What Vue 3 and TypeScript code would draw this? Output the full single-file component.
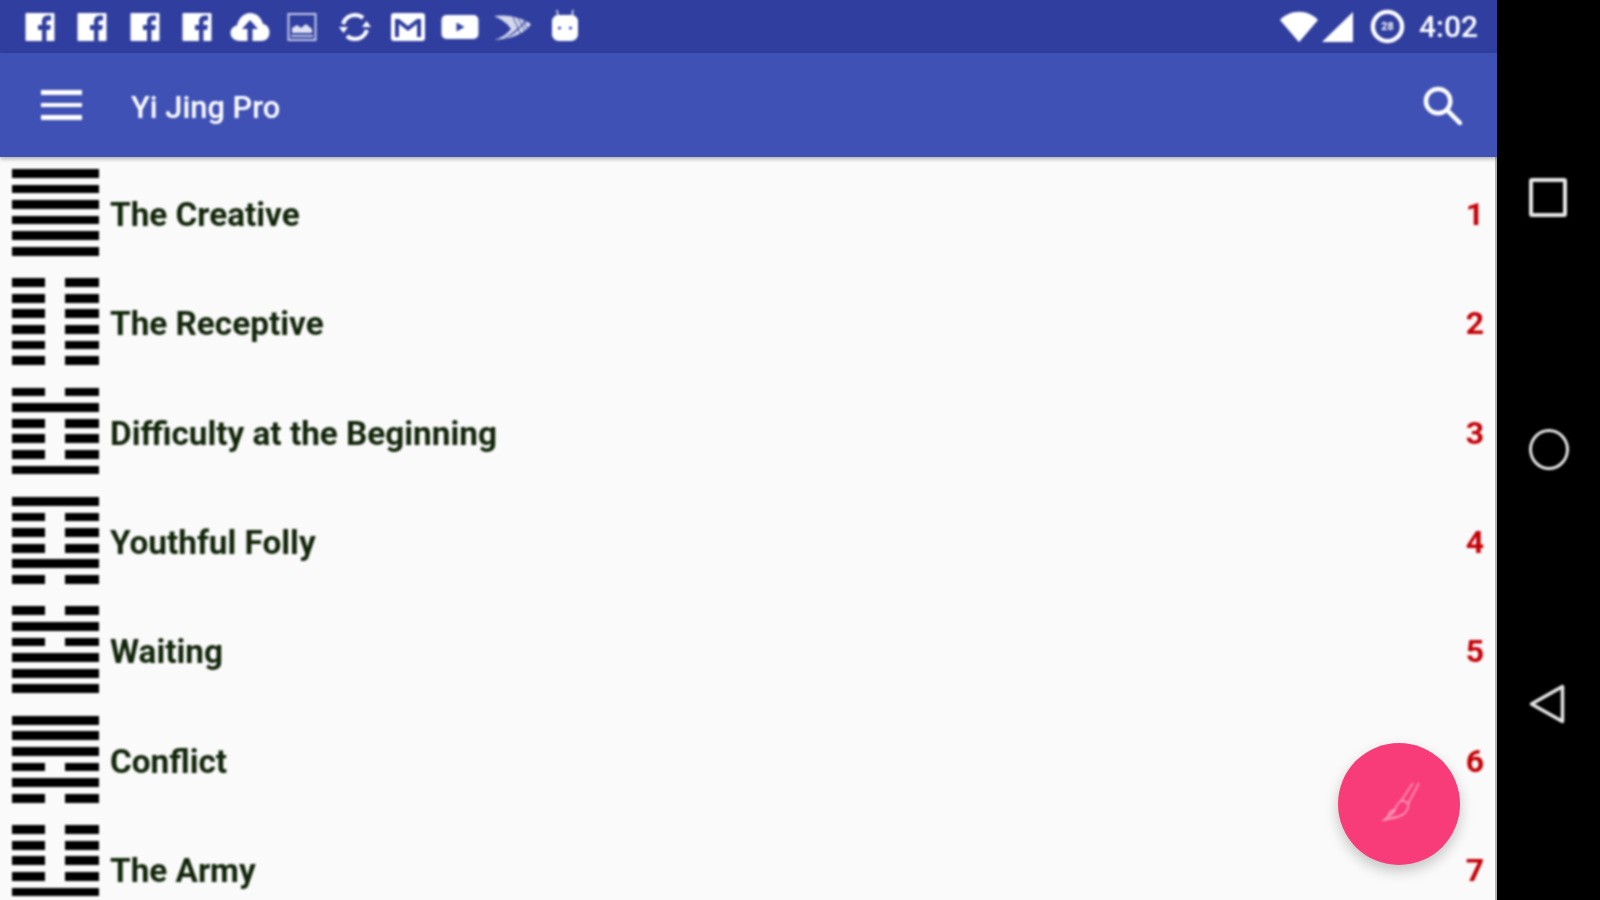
<template>
  <div class="device">
    <div class="screen">
      <div class="status-bar">
        <div class="notif-icons soft">
          <svg v-for="n in 4" :key="n" class="notif" viewBox="0 0 40 40">
            <rect x="5.500" y="6" width="29" height="28" rx="1" fill="#fff" />
            <path d="M22 34V23h-4v-5h4v-3.500c0-4 2.500-6 6-6h3v5h-2.500c-1.500 0-2 .8-2 2V18h4.300l-.7 5H26.500v11z" fill="#303f9f" />
          </svg>
          <svg class="notif" viewBox="0 0 40 40">
            <path d="M10 34C4 34 .5 30 .5 26c0-4 3-7 6.500-7.500C8.500 11 14 6 20 6s11.500 4.500 13 11c4 .5 6.500 4 6.500 8.500 0 5-3.500 8.500-8.500 8.500z" fill="#fff" />
            <path d="M20 13l-8 9h5.500v12h5V22H28z" fill="#303f9f" />
          </svg>
          <svg class="notif" viewBox="0 0 40 40">
            <rect x="6.500" y="7" width="27" height="26" fill="none" stroke="#c5cae9" stroke-width="2" />
            <path d="M10 26v-5l5-3 4 3 5-4 6 5v4z" fill="#dfe2f2" />
            <rect x="9" y="28" width="22" height="2" fill="#c5cae9" />
          </svg>
          <svg class="notif" viewBox="0 0 40 40" fill="none" stroke="#fff" stroke-width="4">
            <path d="M8 17c2-6 7-9 12-9 3 0 6 1 8 3" />
            <path d="M32 23c-2 6-7 9-12 9-3 0-6-1-8-3" />
            <path d="M31.500 14l4.500 6h-9z" fill="#fff" stroke="none" />
            <path d="M8.500 26L4 20h9z" fill="#fff" stroke="none" />
          </svg>
          <svg class="notif" viewBox="0 0 40 40">
            <rect x="3" y="6" width="34" height="28" rx="3" fill="#fff" />
            <path d="M7 12v18h4V17l9 7 9-7v13h4V12h-4l-9 7-9-7z" fill="#303f9f" />
          </svg>
          <svg class="notif" viewBox="0 0 40 40">
            <rect x="1.500" y="8" width="37" height="24" rx="5" fill="#fff" />
            <path d="M16.500 15.500l8 4.500-8 4.500z" fill="#303f9f" />
          </svg>
          <svg class="notif" viewBox="0 0 40 40">
            <path d="M1 9c11-2 27 1 37 8-4 8-18 15-37 16 7-2 13-6 17-11C14 16 8 12 1 9z" fill="#fff" fill-opacity="0.8" />
            <path d="M20 10l9 20M25 11l8 15M30 13l5 10M20 27l15-14M17 29l17-16M12 31l14-9" stroke="#303f9f" stroke-width="0.900" fill="none" />
          </svg>
          <svg class="notif" viewBox="0 0 40 40">
            <path d="M13 9l-1-6M27 9l1-6" stroke="#c5cae9" stroke-width="1.800" />
            <path d="M7 14c0-3 3-6 6-6h14c3 0 6 3 6 6v13c0 4-3 7-7 7H14c-4 0-7-3-7-7z" fill="#fff" />
            <circle cx="14.500" cy="21" r="1.500" fill="#303f9f" />
            <circle cx="25.500" cy="21" r="1.500" fill="#303f9f" />
          </svg>
        </div>
        <div class="system-icons soft">
          <svg class="wifi" viewBox="0 0 40 32"><path d="M0 8.500C5 3.500 12 0 20 0s15 3.500 20 8.500L20 32z" fill="#fff" /></svg>
          <svg class="signal" viewBox="0 0 31 30"><path d="M31 0v30H0z" fill="#fff" /></svg>
          <svg class="battery" viewBox="0 0 36 36">
            <circle cx="18" cy="18" r="15" fill="none" stroke="#fff" stroke-width="4.500" />
            <text x="18" y="22" text-anchor="middle" class="battery-num">28</text>
          </svg>
          <span class="clock">4:02</span>
        </div>
      </div>

      <header class="app-bar">
        <button class="menu-btn soft" type="button" aria-label="Menu">
          <span></span><span></span><span></span>
        </button>
        <h1 class="title soft">Yi Jing Pro</h1>
        <svg class="search soft" viewBox="0 0 40 40" fill="none" stroke="#fff" stroke-width="4.600">
          <circle cx="15.500" cy="15.500" r="12.500" />
          <path d="M24.500 24.500L38 38" stroke-linecap="round" />
        </svg>
      </header>

      <main class="list">
        <div v-for="h in hexagrams" :key="h.num" class="row">
          <div class="hexagram soft">
            <div v-for="(solid, i) in h.lines.split('')" :key="i" class="line" :class="{ broken: solid === '0' }">
              <span></span><span v-if="solid === '0'"></span>
            </div>
          </div>
          <span class="name soft">{{ h.name }}</span>
          <span class="num soft">{{ h.num }}</span>
        </div>
      </main>

      <button class="fab" type="button" aria-label="Draw">
        <svg class="soft" viewBox="0 0 44 44" fill="none" stroke="#ffb3cd" stroke-width="1.300">
          <path d="M24 19L36 1M31 22L42 1" />
          <path d="M24 19c-3 2-5 5-6 9" />
          <path d="M24 19c2-1 6 1 7 3 1 1 0 4-1 6-2 4-6 6-10 7-4 1-9 2-13 3 2-2 6-4 8-6 2-2 2-3 3-4" />
          <path d="M18 28c-4 0-6 3-7 6" />
        </svg>
      </button>
    </div>

    <nav class="nav-bar">
      <div class="nav-square soft"></div>
      <div class="nav-circle soft"></div>
      <svg class="nav-back soft" viewBox="0 0 36 40" fill="none" stroke="#e6e6e6" stroke-width="3.500" stroke-linejoin="round">
        <path d="M33.500 2.500v35L2.500 20z" />
      </svg>
    </nav>
  </div>
</template>

<script setup lang="ts">
interface Hexagram {
  num: number;
  name: string;
  lines: string;
}

// lines are listed top to bottom, 1 = solid, 0 = broken
const hexagrams: Hexagram[] = [
  { num: 1, name: "The Creative", lines: "111111" },
  { num: 2, name: "The Receptive", lines: "000000" },
  { num: 3, name: "Difficulty at the Beginning", lines: "010001" },
  { num: 4, name: "Youthful Folly", lines: "100010" },
  { num: 5, name: "Waiting", lines: "010111" },
  { num: 6, name: "Conflict", lines: "111010" },
  { num: 7, name: "The Army", lines: "000010" },
];
</script>

<style>
html,
body {
  margin: 0;
  background: #000;
}
</style>

<style scoped>
.device {
  display: flex;
  width: 1600px;
  height: 900px;
  overflow: hidden;
  background: #000;
  font-family: Roboto, "Liberation Sans", sans-serif;
}

/* the source capture is a soft upscale */
.soft {
  filter: blur(0.8px);
}

.screen {
  position: relative;
  display: flex;
  flex: none;
  flex-direction: column;
  width: 1497px;
  height: 900px;
  overflow: hidden;
  background: #fafafa;
}

.status-bar {
  display: flex;
  flex: none;
  align-items: center;
  justify-content: space-between;
  height: 53px;
  padding: 0 19px 0 19.500px;
  box-sizing: border-box;
  background: #303f9f;
}

.notif-icons {
  display: flex;
  gap: 12.600px;
}

.notif {
  width: 40px;
  height: 40px;
}

.system-icons {
  display: flex;
  align-items: center;
}

.wifi {
  width: 38px;
  height: 32px;
}

.signal {
  width: 31px;
  height: 30px;
  margin-left: 4px;
}

.battery {
  width: 35px;
  height: 35px;
  margin-left: 17px;
}

.battery-num {
  fill: #fff;
  font-size: 11px;
  font-weight: 700;
  font-family: Roboto, sans-serif;
}

.clock {
  margin-left: 14px;
  color: #fff;
  font-size: 30px;
  font-weight: 500;
}

.app-bar {
  position: relative;
  z-index: 1;
  display: flex;
  flex: none;
  align-items: center;
  height: 104px;
  padding: 0 35px 0 41px;
  box-sizing: border-box;
  background: #3f51b5;
  box-shadow: 0 2px 4px rgba(0, 0, 0, 0.3);
}

.menu-btn {
  display: flex;
  flex-direction: column;
  gap: 8px;
  width: 41px;
  padding: 0;
  background: none;
  border: none;
}

.menu-btn span {
  height: 4.500px;
  background: #fff;
}

.title {
  flex: 1;
  margin: 4px 0 0 49px;
  color: #fff;
  font-size: 30.800px;
  font-weight: 500;
}

.search {
  width: 39px;
  height: 39px;
}

.list {
  display: flex;
  flex: 1;
  flex-direction: column;
  padding-top: 0.600px;
  border-right: 2px solid #b0b0b0;
}

.row {
  display: flex;
  flex: none;
  align-items: center;
  height: 109.400px;
  padding: 0 11px 0 12px;
}

.hexagram {
  display: flex;
  flex-direction: column;
  gap: 6.800px;
  width: 87px;
}

.line {
  display: flex;
  justify-content: space-between;
  height: 8.800px;
}

.line span {
  flex: 1;
  background: #000;
}

.line.broken span {
  flex: none;
  width: 32.500px;
}

.line.broken span:last-child {
  width: 34px;
}

.name {
  flex: 1;
  margin: 4px 0 0 11px;
  color: #12260a;
  font-size: 33.300px;
  font-weight: 700;
}

.num {
  margin-top: 3px;
  color: #c40006;
  font-size: 32px;
  font-weight: 700;
}

.fab {
  position: absolute;
  left: 1338px;
  top: 743px;
  display: flex;
  align-items: center;
  justify-content: center;
  width: 122px;
  height: 122px;
  padding: 0;
  background: #f83c7a;
  border: none;
  border-radius: 50%;
  box-shadow: 0 6px 14px rgba(0, 0, 0, 0.22);
}

.fab svg {
  width: 44px;
  height: 44px;
}

.nav-bar {
  display: flex;
  flex: 1;
  flex-direction: column;
  align-items: center;
  padding-top: 178px;
}

.nav-square {
  width: 30px;
  height: 31px;
  margin-right: 1px;
  border: 4px solid #e6e6e6;
  border-radius: 3px;
}

.nav-circle {
  width: 34px;
  height: 35px;
  margin-top: 212px;
  border: 3.500px solid #e6e6e6;
  border-radius: 50%;
}

.nav-back {
  width: 36px;
  height: 40px;
  margin-top: 214px;
  margin-right: 3px;
}
</style>
